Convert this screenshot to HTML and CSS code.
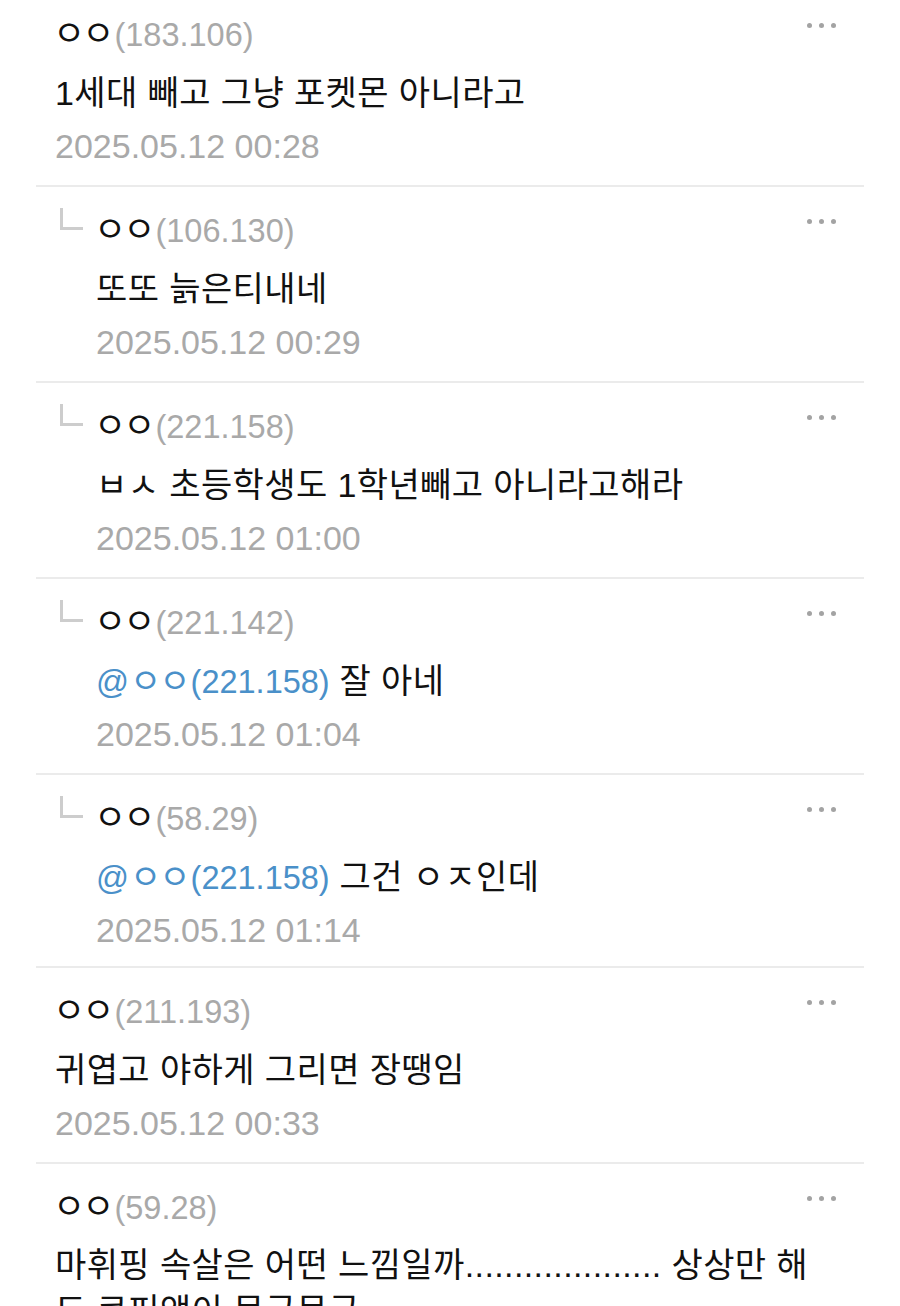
FILE: index.html
```html
<!DOCTYPE html>
<html lang="ko">
<head>
<meta charset="utf-8">
<title>댓글</title>
<link rel="stylesheet" href="styles.css">
</head>
<body>
<div class="list">
  <div class="comment">
    <div class="main">
      <div class="head"><span class="name">ㅇㅇ</span><span class="ip">(183.106)</span><span class="more"><i></i><i></i><i></i></span></div>
      <div class="text">1세대 빼고 그냥 포켓몬 아니라고</div>
      <div class="date">2025.05.12 00:28</div>
    </div>
  </div>

  <div class="comment reply">
    <span class="arrow"></span>
    <div class="main">
      <div class="head"><span class="name">ㅇㅇ</span><span class="ip">(106.130)</span><span class="more"><i></i><i></i><i></i></span></div>
      <div class="text">또또 늙은티내네</div>
      <div class="date">2025.05.12 00:29</div>
    </div>
  </div>

  <div class="comment reply">
    <span class="arrow"></span>
    <div class="main">
      <div class="head"><span class="name">ㅇㅇ</span><span class="ip">(221.158)</span><span class="more"><i></i><i></i><i></i></span></div>
      <div class="text">ㅂㅅ 초등학생도 1학년빼고 아니라고해라</div>
      <div class="date">2025.05.12 01:00</div>
    </div>
  </div>

  <div class="comment reply">
    <span class="arrow"></span>
    <div class="main">
      <div class="head"><span class="name">ㅇㅇ</span><span class="ip">(221.142)</span><span class="more"><i></i><i></i><i></i></span></div>
      <div class="text"><span class="mention">@<span class="mname">ㅇㅇ</span>(221.158)</span> 잘 아네</div>
      <div class="date">2025.05.12 01:04</div>
    </div>
  </div>

  <div class="comment reply compact">
    <span class="arrow"></span>
    <div class="main">
      <div class="head"><span class="name">ㅇㅇ</span><span class="ip">(58.29)</span><span class="more"><i></i><i></i><i></i></span></div>
      <div class="text"><span class="mention">@<span class="mname">ㅇㅇ</span>(221.158)</span> 그건 ㅇㅈ인데</div>
      <div class="date">2025.05.12 01:14</div>
    </div>
  </div>

  <div class="comment">
    <div class="main">
      <div class="head"><span class="name">ㅇㅇ</span><span class="ip">(211.193)</span><span class="more"><i></i><i></i><i></i></span></div>
      <div class="text">귀엽고 야하게 그리면 장땡임</div>
      <div class="date">2025.05.12 00:33</div>
    </div>
  </div>

  <div class="comment last">
    <div class="main">
      <div class="head"><span class="name">ㅇㅇ</span><span class="ip">(59.28)</span><span class="more"><i></i><i></i><i></i></span></div>
      <div class="text">마휘핑 속살은 어떤 느낌일까.................... 상상만 해도 쿠퍼액이 몽글몽글</div>
    </div>
  </div>
</div>
</body>
</html>
```

FILE: styles.css
```css
html, body {
  margin: 0;
  padding: 0;
  background: #ffffff;
}

body {
  font-family: "Liberation Sans", "Noto Sans CJK KR", sans-serif;
  font-size: 34px;
  color: #111111;
  overflow: hidden;
}

.list {
  margin: -9px 36px 0 36px;
}

.comment {
  display: flex;
  align-items: flex-start;
  padding: 19px 28px 18px 19px;
  border-bottom: 2px solid #ebebeb;
}

.main {
  flex: 1;
  min-width: 0;
}

.head {
  display: flex;
  align-items: baseline;
  line-height: 42px;
  height: 42px;
  white-space: nowrap;
}

.name {
  font-family: "Noto Sans CJK KR", sans-serif;
  font-size: 35px;
  letter-spacing: -3px;
  color: #111111;
  margin-left: -2px;
  margin-right: 3px;
}

.ip {
  font-size: 32.5px;
  color: #a9a9a9;
}

.more {
  display: flex;
  gap: 7px;
  margin-left: auto;
  align-self: flex-start;
  margin-top: 13px;
}

.more i {
  display: block;
  width: 5px;
  height: 5px;
  border-radius: 50%;
  background: #a3a3a3;
}

.text {
  height: 48px;
  margin-top: 17px;
  line-height: 48px;
  letter-spacing: 0.4px;
  color: #111111;
}

.mention {
  color: #4a90c9;
  font-size: 32.5px;
  line-height: 1;
  letter-spacing: 0;
}

.mname {
  font-family: "Noto Sans CJK KR", sans-serif;
  font-size: 34px;
  line-height: 1;
  letter-spacing: -2px;
  margin: 0 2px 0 1px;
}

.date {
  margin-top: 8px;
  line-height: 42px;
  color: #a9a9a9;
}

.reply {
  padding-left: 24px;
}

.compact {
  padding-bottom: 15px;
}

.arrow {
  flex: none;
  width: 20px;
  height: 19px;
  margin-top: 2px;
  margin-right: 13px;
  border-left: 3px solid #cdcdcd;
  border-bottom: 3px solid #cdcdcd;
}

.last {
  border-bottom: none;
}

.last .text {
  height: auto;
  margin-top: 17px;
  line-height: 46px;
}
```
